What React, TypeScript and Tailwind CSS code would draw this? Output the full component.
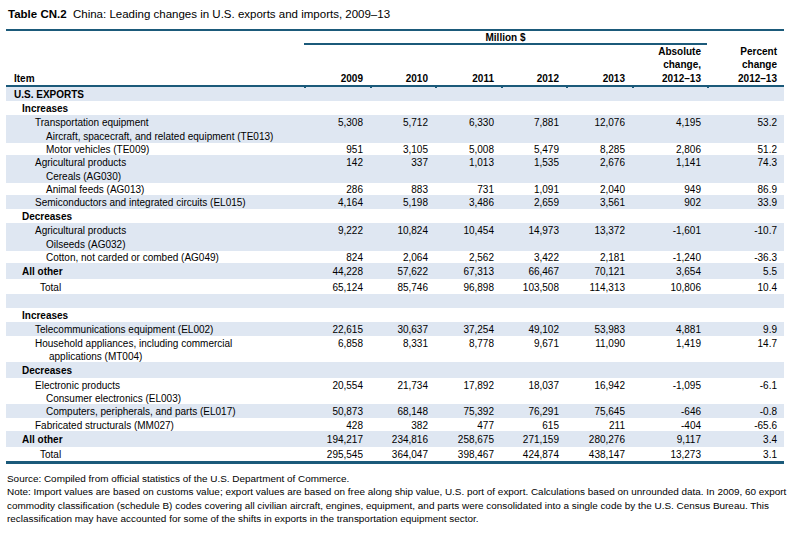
import React from "react";

type Row = {
  label: string;
  indent: number;
  h: number;
  blue?: boolean;
  bold?: boolean;
  vals?: string[];
};

const rows: Row[] = [
  { label: "U.S. EXPORTS", indent: 8, h: 14, blue: true, bold: true },
  { label: "Increases", indent: 16, h: 14, bold: true },
  { label: "Transportation equipment", indent: 29, h: 14, blue: true, vals: ["5,308", "5,712", "6,330", "7,881", "12,076", "4,195", "53.2"] },
  { label: "Aircraft, spacecraft, and related equipment (TE013)", indent: 40, h: 14, blue: true },
  { label: "Motor vehicles (TE009)", indent: 40, h: 12, vals: ["951", "3,105", "5,008", "5,479", "8,285", "2,806", "51.2"] },
  { label: "Agricultural products", indent: 29, h: 14, blue: true, vals: ["142", "337", "1,013", "1,535", "2,676", "1,141", "74.3"] },
  { label: "Cereals (AG030)", indent: 40, h: 14, blue: true },
  { label: "Animal feeds (AG013)", indent: 40, h: 12, vals: ["286", "883", "731", "1,091", "2,040", "949", "86.9"] },
  { label: "Semiconductors and integrated circuits (EL015)", indent: 29, h: 14, blue: true, vals: ["4,164", "5,198", "3,486", "2,659", "3,561", "902", "33.9"] },
  { label: "Decreases", indent: 16, h: 14, bold: true },
  { label: "Agricultural products", indent: 29, h: 14, blue: true, vals: ["9,222", "10,824", "10,454", "14,973", "13,372", "-1,601", "-10.7"] },
  { label: "Oilseeds (AG032)", indent: 40, h: 14, blue: true },
  { label: "Cotton, not carded or combed (AG049)", indent: 40, h: 12, vals: ["824", "2,064", "2,562", "3,422", "2,181", "-1,240", "-36.3"] },
  { label: "All other", indent: 16, h: 16, blue: true, bold: true, vals: ["44,228", "57,622", "67,313", "66,467", "70,121", "3,654", "5.5"] },
  { label: "Total", indent: 34, h: 15, vals: ["65,124", "85,746", "96,898", "103,508", "114,313", "10,806", "10.4"] },
  { label: "", indent: 8, h: 14, blue: true },
  { label: "Increases", indent: 16, h: 14, bold: true },
  { label: "Telecommunications equipment (EL002)", indent: 29, h: 14, blue: true, vals: ["22,615", "30,637", "37,254", "49,102", "53,983", "4,881", "9.9"] },
  { label: "Household appliances, including commercial", indent: 29, h: 13, vals: ["6,858", "8,331", "8,778", "9,671", "11,090", "1,419", "14.7"] },
  { label: "applications (MT004)", indent: 43, h: 13 },
  { label: "Decreases", indent: 16, h: 16, blue: true, bold: true },
  { label: "Electronic products", indent: 29, h: 13, vals: ["20,554", "21,734", "17,892", "18,037", "16,942", "-1,095", "-6.1"] },
  { label: "Consumer electronics (EL003)", indent: 40, h: 13 },
  { label: "Computers, peripherals, and parts (EL017)", indent: 40, h: 14, blue: true, vals: ["50,873", "68,148", "75,392", "76,291", "75,645", "-646", "-0.8"] },
  { label: "Fabricated structurals (MM027)", indent: 29, h: 13, vals: ["428", "382", "477", "615", "211", "-404", "-65.6"] },
  { label: "All other", indent: 16, h: 16, blue: true, bold: true, vals: ["194,217", "234,816", "258,675", "271,159", "280,276", "9,117", "3.4"] },
  { label: "Total", indent: 34, h: 14, vals: ["295,545", "364,047", "398,467", "424,874", "438,147", "13,273", "3.1"] },
];

const colW = ["w-[66px]", "w-[65px]", "w-[66px]", "w-[65px]", "w-[66px]", "w-[75px]", "w-[77px]"];

export default function App() {
  return (
    <div className="w-[796px] h-[538px] bg-white text-black font-['Liberation_Sans',Arial,sans-serif] text-[10px] overflow-hidden">
      <div className="h-[29px] pl-[8px] pt-[7px] text-[11.5px] leading-[15px] whitespace-pre">
        <span className="font-bold">Table CN.2</span>
        <span>{"  China: Leading changes in U.S. exports and imports, 2009–13"}</span>
      </div>
      <div className="ml-[6px] w-[778px]">
        <div className="h-[2px] bg-[#1b5a7a]" />
        <div className="flex h-[12px] font-bold">
          <div className="w-[298px]" />
          <div className="w-[403px] flex items-center justify-center leading-none pt-[1px]">Million $</div>
        </div>
        <div className="flex h-[2px]">
          <div className="w-[298px]" />
          <div className="w-[403px] bg-[#1b5a7a]" />
        </div>
        <div className="flex h-[40px] items-end font-bold leading-[13.5px]">
          <div className="w-[298px] pl-[8px]">Item</div>
          {["2009", "2010", "2011", "2012", "2013"].map((y, i) => (
            <div key={y} className={`${colW[i]} text-right pr-[7px]`}>{y}</div>
          ))}
          <div className="w-[75px] text-right pr-[6px]">
            Absolute
            <br />
            change,
            <br />
            2012–13
          </div>
          <div className="w-[77px] text-right pr-[7px]">
            Percent
            <br />
            change
            <br />
            2012–13
          </div>
        </div>
        <div className="h-[2px] bg-[#1b5a7a]" />
        <div className="relative">
          <div className="absolute left-0 top-0 flex h-[1px] w-full">
            <div className="w-[298px]" />
            {colW.map((c, i) => (
              <div key={i} className={`${c} h-[1px] border-l-2 border-[#1b5a7a]`} />
            ))}
          </div>
          {rows.map((r, idx) => (
            <div
              key={idx}
              className={`flex items-center pt-[2px] ${r.blue ? "bg-[#dfe7f2]" : "bg-white"}`}
              style={{ height: r.h }}
            >
              <div
                className={`w-[298px] whitespace-nowrap leading-none ${r.bold ? "font-bold" : ""}`}
                style={{ paddingLeft: r.indent }}
              >
                {r.label}
              </div>
              {r.vals &&
                r.vals.map((v, i) => (
                  <div key={i} className={`${colW[i]} text-right leading-none ${i === 5 ? "pr-[6px]" : "pr-[7px]"}`}>
                    {v}
                  </div>
                ))}
            </div>
          ))}
        </div>
        <div className="h-[3px] bg-[#1b5a7a]" />
      </div>
      <div className="pl-[7px] pt-[8px] text-[9.93px] leading-[13.4px] whitespace-nowrap">
        <div>Source: Compiled from official statistics of the U.S. Department of Commerce.</div>
        <div>
          Note: Import values are based on customs value; export values are based on free along ship value, U.S. port of export. Calculations based on unrounded data. In 2009, 60 export
        </div>
        <div>
          commodity classification (schedule B) codes covering all civilian aircraft, engines, equipment, and parts were consolidated into a single code by the U.S. Census Bureau. This
        </div>
        <div>reclassification may have accounted for some of the shifts in exports in the transportation equipment sector.</div>
      </div>
    </div>
  );
}
